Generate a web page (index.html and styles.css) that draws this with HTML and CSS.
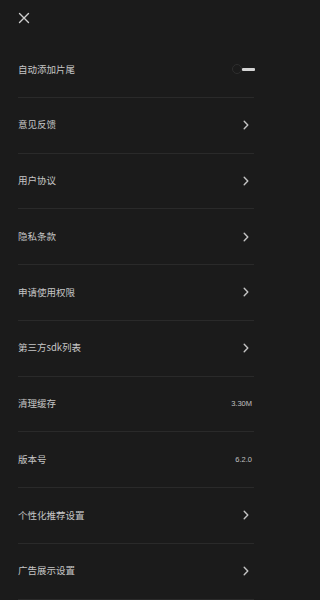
FILE: index.html
```html
<!DOCTYPE html>
<html lang="zh">
<head>
<meta charset="utf-8">
<link rel="stylesheet" href="styles.css">
</head>
<body>
<div class="page">
  <div class="header">
    <svg class="close" width="12" height="12" viewBox="0 0 12 12"><path d="M1.5 1.5L10.5 10.5M10.5 1.5L1.5 10.5" stroke="#cfcfcf" stroke-width="1.4" stroke-linecap="round"/></svg>
  </div>
  <div class="list">
    <div class="row"><span class="label">自动添加片尾</span>
      <span class="toggle"><span class="knob"></span><span class="track"></span></span></div>
    <div class="row"><span class="label">意见反馈</span><svg class="chev" width="6" height="10" viewBox="0 0 6 10"><path d="M1.2 1.2L4.8 5L1.2 8.8" stroke="#c4c4c4" stroke-width="1.4" fill="none" stroke-linecap="round" stroke-linejoin="round"/></svg></div>
    <div class="row"><span class="label">用户协议</span><svg class="chev" width="6" height="10" viewBox="0 0 6 10"><path d="M1.2 1.2L4.8 5L1.2 8.8" stroke="#c4c4c4" stroke-width="1.4" fill="none" stroke-linecap="round" stroke-linejoin="round"/></svg></div>
    <div class="row"><span class="label">隐私条款</span><svg class="chev" width="6" height="10" viewBox="0 0 6 10"><path d="M1.2 1.2L4.8 5L1.2 8.8" stroke="#c4c4c4" stroke-width="1.4" fill="none" stroke-linecap="round" stroke-linejoin="round"/></svg></div>
    <div class="row"><span class="label">申请使用权限</span><svg class="chev" width="6" height="10" viewBox="0 0 6 10"><path d="M1.2 1.2L4.8 5L1.2 8.8" stroke="#c4c4c4" stroke-width="1.4" fill="none" stroke-linecap="round" stroke-linejoin="round"/></svg></div>
    <div class="row"><span class="label">第三方sdk列表</span><svg class="chev" width="6" height="10" viewBox="0 0 6 10"><path d="M1.2 1.2L4.8 5L1.2 8.8" stroke="#c4c4c4" stroke-width="1.4" fill="none" stroke-linecap="round" stroke-linejoin="round"/></svg></div>
    <div class="row"><span class="label">清理缓存</span><span class="value">3.30M</span></div>
    <div class="row"><span class="label">版本号</span><span class="value">6.2.0</span></div>
    <div class="row"><span class="label">个性化推荐设置</span><svg class="chev" width="6" height="10" viewBox="0 0 6 10"><path d="M1.2 1.2L4.8 5L1.2 8.8" stroke="#c4c4c4" stroke-width="1.4" fill="none" stroke-linecap="round" stroke-linejoin="round"/></svg></div>
    <div class="row"><span class="label">广告展示设置</span><svg class="chev" width="6" height="10" viewBox="0 0 6 10"><path d="M1.2 1.2L4.8 5L1.2 8.8" stroke="#c4c4c4" stroke-width="1.4" fill="none" stroke-linecap="round" stroke-linejoin="round"/></svg></div>
  </div>
</div>
</body>
</html>
```
FILE: styles.css
```css
html, body {
  margin: 0;
  padding: 0;
  background: #1b1b1b;
}
.page {
  width: 270px;
  height: 600px;
  overflow: hidden;
  font-family: "Noto Sans CJK SC", "Noto Sans", sans-serif;
  color: #c6c6c6;
}
.header {
  height: 42px;
  display: flex;
  align-items: center;
  padding-left: 18px;
  box-sizing: border-box;
  padding-bottom: 6px;
}
.close {
  display: block;
}
.list {
  padding: 0 16px 0 18px;
}
.row {
  height: 54.75px;
  border-bottom: 1px solid #2a2a2a;
  display: flex;
  align-items: center;
  justify-content: space-between;
}
.label {
  font-size: 9.5px;
  line-height: 1;
}
.chev {
  display: block;
  margin-right: 5px;
}
.value {
  font-size: 7.5px;
  font-family: "Liberation Sans", Arial, sans-serif;
  margin-right: 2px;
  color: #c0c0c0;
}
.toggle {
  display: flex;
  align-items: center;
  margin-right: -1px;
}
.knob {
  width: 8px;
  height: 8px;
  border-radius: 50%;
  border: 1.5px solid #2e2e2e;
  background: #1b1b1b;
}
.track {
  width: 13px;
  height: 3px;
  border-radius: 1px;
  background: #d4d4d4;
  margin-left: 0;
}
```
